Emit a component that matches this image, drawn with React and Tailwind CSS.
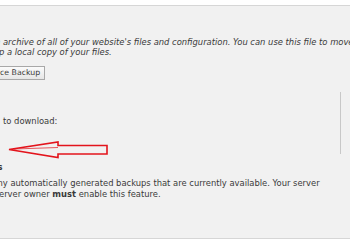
export default function App() {
  const font = { fontFamily: '"DejaVu Sans", Verdana, sans-serif' };
  return (
    <div className="w-[350px] h-[250px] bg-white overflow-hidden relative text-[#3a3a3a]" style={font}>
      <div className="h-[5px] bg-white" />
      <div className="h-[234px] bg-[#f1f1f1] border-y border-[#d6d6d6] flex flex-col text-[8.4px]">
        <div className="mt-[31px] whitespace-nowrap italic leading-[10px] -ml-[5px]">n archive of all of your website's files and configuration. You can use this file to move</div>
        <div className="whitespace-nowrap italic leading-[10px] -ml-[1px]">p a local copy of your files.</div>
        <div className="mt-[9px] flex">
          <div className="-ml-[2px] h-[14px] pl-[1px] pr-[4px] border border-[#a8a8a8] bg-gradient-to-b from-[#fbfbfb] to-[#e6e6e6] flex items-center whitespace-nowrap text-[7.8px] leading-none">ce Backup</div>
        </div>
        <div className="mt-[12px] h-[62px] w-[341px] border-r border-[#c8c8c8] flex flex-col">
          <div className="mt-[24px] whitespace-nowrap leading-[10px] ml-[3px]">to download:</div>
        </div>
        <div className="mt-[8px] whitespace-nowrap font-bold leading-[11px] -ml-[2.5px]">s</div>
        <div className="mt-[5px] whitespace-nowrap leading-[11px] -ml-[2.5px]">ny automatically generated backups that are currently available. Your server</div>
        <div className="whitespace-nowrap leading-[11px] -ml-[1px]">erver owner <b>must</b> enable this feature.</div>
      </div>
      <svg className="absolute left-0 top-0" width="350" height="250" viewBox="0 0 350 250">
        <polygon points="9,149.5 58,142 58,145.5 107,145.5 107,154 58,154 58,157.5" fill="none" stroke="#e3141c" strokeWidth="1.6" strokeLinejoin="miter" />
        <polyline points="14,149 58,147.5" fill="none" stroke="#e3141c" strokeWidth="1" opacity="0.7" />
      </svg>
    </div>
  );
}
